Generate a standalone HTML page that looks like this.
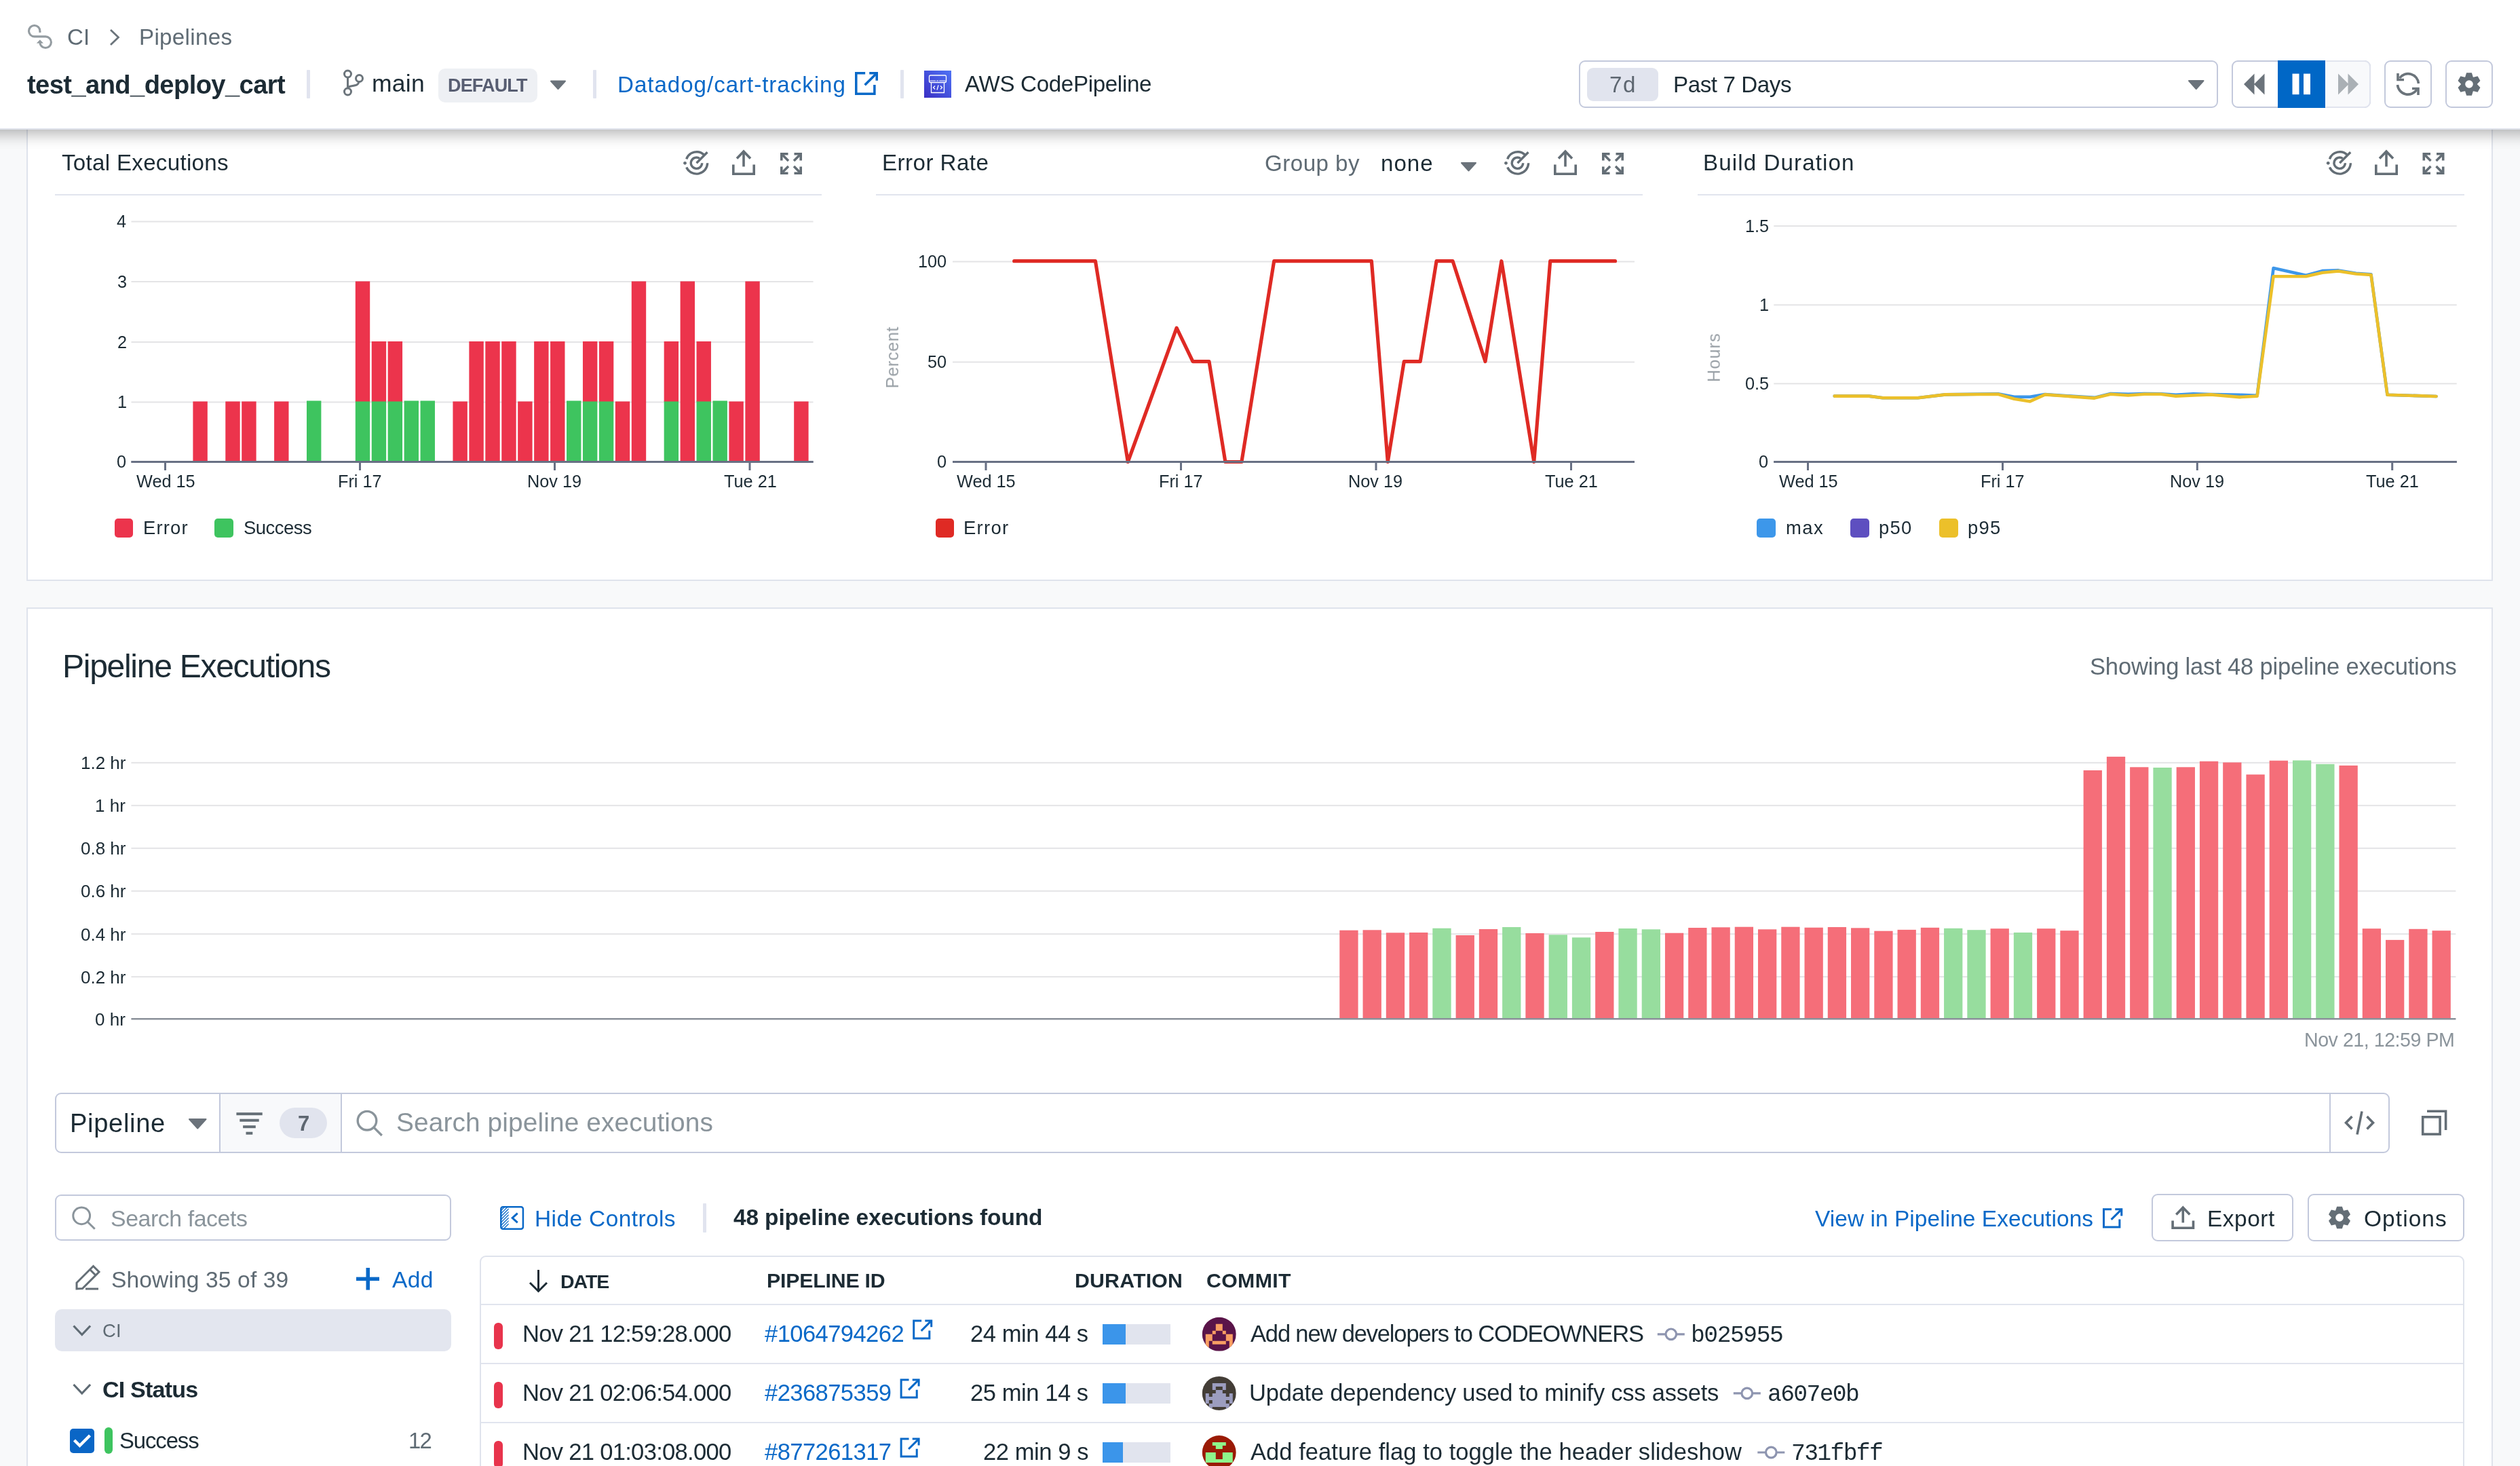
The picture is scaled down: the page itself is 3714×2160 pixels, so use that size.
<!DOCTYPE html><html><head><meta charset="utf-8"><style>html,body{margin:0;padding:0;width:3714px;height:2160px;overflow:hidden;background:#f8f9fa}body{position:relative}span{will-change:transform}</style></head><body>
<div style="position:absolute;left:0px;top:0px;width:3714px;height:2160px;background:#f8f9fa"></div>
<div style="position:absolute;left:39px;top:140px;width:3635px;height:716px;background:#fff;border:2px solid #dfe3ec;box-sizing:border-box"></div>
<div style="position:absolute;left:39px;top:895px;width:3635px;height:1400px;background:#fff;border:2px solid #dfe3ec;box-sizing:border-box"></div>
<div style="position:absolute;left:81px;top:286px;width:1130px;height:2px;background:#e1e4ee"></div>
<div style="position:absolute;left:1291px;top:286px;width:1130px;height:2px;background:#e1e4ee"></div>
<div style="position:absolute;left:2502px;top:286px;width:1130px;height:2px;background:#e1e4ee"></div>
<div style="position:absolute;left:169px;top:764px;width:27px;height:28px;background:#ec344c;border-radius:5px"></div>
<div style="position:absolute;left:316px;top:764px;width:28px;height:28px;background:#3ec45f;border-radius:5px"></div>
<div style="position:absolute;left:1379px;top:764px;width:27px;height:28px;background:#df2a24;border-radius:5px"></div>
<div style="position:absolute;left:2589px;top:764px;width:28px;height:28px;background:#3d97ea;border-radius:5px"></div>
<div style="position:absolute;left:2726.5px;top:764px;width:28px;height:28px;background:#5e4fc0;border-radius:5px"></div>
<div style="position:absolute;left:2858px;top:764px;width:28px;height:28px;background:#ecc02a;border-radius:5px"></div>
<div style="position:absolute;left:81.3px;top:1609.5px;width:3440.5px;height:89px;border:2px solid #c3c9dc;border-radius:9px;background:#fff;box-sizing:border-box"></div>
<div style="position:absolute;left:324.5px;top:1611.5px;width:177.5px;height:85px;background:#f8f9fb"></div>
<div style="position:absolute;left:323px;top:1611.5px;width:2px;height:85px;background:#c3c9dc"></div>
<div style="position:absolute;left:501.5px;top:1611.5px;width:2px;height:85px;background:#c3c9dc"></div>
<div style="position:absolute;left:3433px;top:1611.5px;width:2px;height:85px;background:#c3c9dc"></div>
<div style="position:absolute;left:412px;top:1632px;width:70px;height:45px;background:#e1e4ee;border-radius:23px"></div>
<div style="position:absolute;left:81.4px;top:1759.7px;width:584px;height:68.5px;border:2px solid #c3c9dc;border-radius:9px;background:#fff;box-sizing:border-box"></div>
<div style="position:absolute;left:81.4px;top:1929.2px;width:584px;height:61.5px;background:#e3e6ef;border-radius:10px"></div>
<div style="position:absolute;left:103.2px;top:2105.2px;width:35.8px;height:35.6px;background:#0a66c6;border-radius:5px"></div>
<div style="position:absolute;left:154px;top:2102.8px;width:12px;height:39.4px;background:#3ec45f;border-radius:6px"></div>
<div style="position:absolute;left:1036px;top:1773px;width:5px;height:43px;background:#e1e4ef;border-radius:1px"></div>
<div style="position:absolute;left:3170.8px;top:1759px;width:209.5px;height:69.5px;border:2px solid #c3c9dc;border-radius:9px;background:#fff;box-sizing:border-box"></div>
<div style="position:absolute;left:3400.5px;top:1759px;width:231px;height:69.5px;border:2px solid #c3c9dc;border-radius:9px;background:#fff;box-sizing:border-box"></div>
<div style="position:absolute;left:707px;top:1849.5px;width:2924.5px;height:400px;border:2px solid #dfe3ec;border-radius:9px;background:#fff;box-sizing:border-box"></div>
<div style="position:absolute;left:709px;top:1920.5px;width:2920.5px;height:2px;background:#e1e4ee"></div>
<div style="position:absolute;left:709px;top:2007.8px;width:2920.5px;height:2px;background:#e1e4ee"></div>
<div style="position:absolute;left:709px;top:2094.6px;width:2920.5px;height:2px;background:#e1e4ee"></div>
<div style="position:absolute;left:728.3px;top:1948.8px;width:12.5px;height:39.5px;background:#e8344c;border-radius:6px"></div>
<div style="position:absolute;left:1625.3px;top:1951.0px;width:100px;height:29.5px;background:#e1e4ee"></div>
<div style="position:absolute;left:1625.3px;top:1951.0px;width:33.5px;height:29.5px;background:#3b95ea"></div>
<div style="position:absolute;left:728.3px;top:2035.8999999999999px;width:12.5px;height:39.5px;background:#e8344c;border-radius:6px"></div>
<div style="position:absolute;left:1625.3px;top:2038.1px;width:100px;height:29.5px;background:#e1e4ee"></div>
<div style="position:absolute;left:1625.3px;top:2038.1px;width:34.0px;height:29.5px;background:#3b95ea"></div>
<div style="position:absolute;left:728.3px;top:2123.0px;width:12.5px;height:39.5px;background:#e8344c;border-radius:6px"></div>
<div style="position:absolute;left:1625.3px;top:2125.2px;width:100px;height:29.5px;background:#e1e4ee"></div>
<div style="position:absolute;left:1625.3px;top:2125.2px;width:29.90000000000009px;height:29.5px;background:#3b95ea"></div>
<svg style="position:absolute;left:0;top:0" width="3714" height="2160" viewBox="0 0 3714 2160">
<g fill="none" stroke="#646e76" stroke-width="3.4"><path d="M1011.7 234.3 A16 16 0 0 1 1038.0 228.5"/><path d="M1042.7 240.3 A16.2 16.2 0 0 1 1011.7 246.5"/><path d="M1034.7 240.3 A8.2 8.2 0 1 1 1031.0 233.3"/><path d="M1026.5 240.3 L1042.5 224.3"/></g><circle cx="1009.5" cy="240.3" r="2.4" fill="#646e76"/>
<g fill="none" stroke="#646e76" stroke-width="3.6"><path d="M1080.8 242.5 L1080.8 256.2 L1111.2 256.2 L1111.2 242.5"/><path d="M1096.0 245.5 L1096.0 224"/><path d="M1086 233.5 L1096.0 223.2 L1106 233.5"/></g>
<g fill="none" stroke="#646e76" stroke-width="3.6"><path d="M1151.8 236.5 L1151.8 226.8 L1161.5 226.8"/><path d="M1152 227 L1162 237"/><path d="M1170.5 226.8 L1180.2 226.8 L1180.2 236.5"/><path d="M1180 227 L1170 237"/><path d="M1151.8 245.5 L1151.8 255.2 L1161.5 255.2"/><path d="M1152 255 L1162 245"/><path d="M1170.5 255.2 L1180.2 255.2 L1180.2 245.5"/><path d="M1180 255 L1170 245"/></g>
<g fill="none" stroke="#646e76" stroke-width="3.4"><path d="M2221.7 234.3 A16 16 0 0 1 2248.0 228.5"/><path d="M2252.7 240.3 A16.2 16.2 0 0 1 2221.7 246.5"/><path d="M2244.7 240.3 A8.2 8.2 0 1 1 2241.0 233.3"/><path d="M2236.5 240.3 L2252.5 224.3"/></g><circle cx="2219.5" cy="240.3" r="2.4" fill="#646e76"/>
<g fill="none" stroke="#646e76" stroke-width="3.6"><path d="M2291.8 242.5 L2291.8 256.2 L2322.2 256.2 L2322.2 242.5"/><path d="M2307.0 245.5 L2307.0 224"/><path d="M2297 233.5 L2307.0 223.2 L2317 233.5"/></g>
<g fill="none" stroke="#646e76" stroke-width="3.6"><path d="M2362.8 236.5 L2362.8 226.8 L2372.5 226.8"/><path d="M2363 227 L2373 237"/><path d="M2381.5 226.8 L2391.2 226.8 L2391.2 236.5"/><path d="M2391 227 L2381 237"/><path d="M2362.8 245.5 L2362.8 255.2 L2372.5 255.2"/><path d="M2363 255 L2373 245"/><path d="M2381.5 255.2 L2391.2 255.2 L2391.2 245.5"/><path d="M2391 255 L2381 245"/></g>
<g fill="none" stroke="#646e76" stroke-width="3.4"><path d="M3433.3999999999996 234.3 A16 16 0 0 1 3459.7 228.5"/><path d="M3464.3999999999996 240.3 A16.2 16.2 0 0 1 3433.3999999999996 246.5"/><path d="M3456.3999999999996 240.3 A8.2 8.2 0 1 1 3452.7 233.3"/><path d="M3448.2 240.3 L3464.2 224.3"/></g><circle cx="3431.2" cy="240.3" r="2.4" fill="#646e76"/>
<g fill="none" stroke="#646e76" stroke-width="3.6"><path d="M3501.8 242.5 L3501.8 256.2 L3532.2 256.2 L3532.2 242.5"/><path d="M3517.0 245.5 L3517.0 224"/><path d="M3507 233.5 L3517.0 223.2 L3527 233.5"/></g>
<g fill="none" stroke="#646e76" stroke-width="3.6"><path d="M3572.3 236.5 L3572.3 226.8 L3582.0 226.8"/><path d="M3572.5 227 L3582.5 237"/><path d="M3591.0 226.8 L3600.7 226.8 L3600.7 236.5"/><path d="M3600.5 227 L3590.5 237"/><path d="M3572.3 245.5 L3572.3 255.2 L3582.0 255.2"/><path d="M3572.5 255 L3582.5 245"/><path d="M3591.0 255.2 L3600.7 255.2 L3600.7 245.5"/><path d="M3600.5 255 L3590.5 245"/></g>
<path d="M2154 240 L2175 240 L2164.5 251.5 Z" fill="#6b737b" stroke="#6b737b" stroke-width="2" stroke-linejoin="round"/>
<rect x="193.5" y="325.5" width="1005.0" height="2" fill="#e4e4e6"/>
<rect x="193.5" y="414" width="1005.0" height="2" fill="#e4e4e6"/>
<rect x="193.5" y="503" width="1005.0" height="2" fill="#e4e4e6"/>
<rect x="193.5" y="591.5" width="1005.0" height="2" fill="#e4e4e6"/>
<rect x="193.5" y="679" width="1005.0" height="3" fill="#687084"/>
<rect x="242.0" y="681" width="3" height="12" fill="#687084"/>
<rect x="529.0" y="681" width="3" height="12" fill="#687084"/>
<rect x="816.0" y="681" width="3" height="12" fill="#687084"/>
<rect x="1103.5" y="681" width="3" height="12" fill="#687084"/>
<rect x="284.40" y="591.50" width="21.4" height="88.50" fill="#ec344c"/>
<rect x="332.28" y="591.50" width="21.4" height="88.50" fill="#ec344c"/>
<rect x="356.22" y="591.50" width="21.4" height="88.50" fill="#ec344c"/>
<rect x="404.10" y="591.50" width="21.4" height="88.50" fill="#ec344c"/>
<rect x="451.98" y="590.50" width="21.4" height="88.50" fill="#3ec45f"/>
<rect x="523.80" y="590.50" width="21.4" height="88.50" fill="#3ec45f"/>
<rect x="523.80" y="414.50" width="21.4" height="177.00" fill="#ec344c"/>
<rect x="547.74" y="590.50" width="21.4" height="88.50" fill="#3ec45f"/>
<rect x="547.74" y="503.00" width="21.4" height="88.50" fill="#ec344c"/>
<rect x="571.68" y="590.50" width="21.4" height="88.50" fill="#3ec45f"/>
<rect x="571.68" y="503.00" width="21.4" height="88.50" fill="#ec344c"/>
<rect x="595.62" y="590.50" width="21.4" height="88.50" fill="#3ec45f"/>
<rect x="619.56" y="590.50" width="21.4" height="88.50" fill="#3ec45f"/>
<rect x="667.44" y="591.50" width="21.4" height="88.50" fill="#ec344c"/>
<rect x="691.38" y="503.00" width="21.4" height="177.00" fill="#ec344c"/>
<rect x="715.32" y="503.00" width="21.4" height="177.00" fill="#ec344c"/>
<rect x="739.26" y="503.00" width="21.4" height="177.00" fill="#ec344c"/>
<rect x="763.20" y="591.50" width="21.4" height="88.50" fill="#ec344c"/>
<rect x="787.14" y="503.00" width="21.4" height="177.00" fill="#ec344c"/>
<rect x="811.08" y="503.00" width="21.4" height="177.00" fill="#ec344c"/>
<rect x="835.02" y="590.50" width="21.4" height="88.50" fill="#3ec45f"/>
<rect x="858.96" y="590.50" width="21.4" height="88.50" fill="#3ec45f"/>
<rect x="858.96" y="503.00" width="21.4" height="88.50" fill="#ec344c"/>
<rect x="882.90" y="590.50" width="21.4" height="88.50" fill="#3ec45f"/>
<rect x="882.90" y="503.00" width="21.4" height="88.50" fill="#ec344c"/>
<rect x="906.84" y="591.50" width="21.4" height="88.50" fill="#ec344c"/>
<rect x="930.78" y="414.50" width="21.4" height="265.50" fill="#ec344c"/>
<rect x="978.66" y="590.50" width="21.4" height="88.50" fill="#3ec45f"/>
<rect x="978.66" y="503.00" width="21.4" height="88.50" fill="#ec344c"/>
<rect x="1002.60" y="414.50" width="21.4" height="265.50" fill="#ec344c"/>
<rect x="1026.54" y="590.50" width="21.4" height="88.50" fill="#3ec45f"/>
<rect x="1026.54" y="503.00" width="21.4" height="88.50" fill="#ec344c"/>
<rect x="1050.48" y="590.50" width="21.4" height="88.50" fill="#3ec45f"/>
<rect x="1074.42" y="591.50" width="21.4" height="88.50" fill="#ec344c"/>
<rect x="1098.36" y="414.50" width="21.4" height="265.50" fill="#ec344c"/>
<rect x="1170.18" y="591.50" width="21.4" height="88.50" fill="#ec344c"/>
<rect x="193.5" y="679" width="1005" height="3" fill="#687084"/>
<rect x="1404" y="384.5" width="1005" height="2" fill="#e4e4e6"/>
<rect x="1404" y="532.5" width="1005" height="2" fill="#e4e4e6"/>
<rect x="1404" y="679" width="1005" height="3" fill="#687084"/>
<rect x="1451.5" y="681" width="3" height="12" fill="#687084"/>
<rect x="1739.0" y="681" width="3" height="12" fill="#687084"/>
<rect x="2026.5" y="681" width="3" height="12" fill="#687084"/>
<rect x="2314.0" y="681" width="3" height="12" fill="#687084"/>
<path d="M1494.7 384.7 L1614.4 384.7 L1662.3 680.5 L1734.1 483.2 L1758.0 532.6 L1782.0 532.6 L1805.9 680.5 L1829.9 680.5 L1877.7 384.7 L2021.4 384.7 L2045.3 680.5 L2069.3 532.6 L2093.2 532.6 L2117.1 384.7 L2141.1 384.7 L2189.0 532.6 L2212.9 384.7 L2260.8 680.5 L2284.7 384.7 L2380.5 384.7" fill="none" stroke="#df2a24" stroke-width="5.2" stroke-linejoin="round" stroke-linecap="round"/>
<rect x="1404" y="679" width="1005" height="3" fill="#687084"/>
<rect x="2614.3" y="332" width="1006.3999999999996" height="2" fill="#e4e4e6"/>
<rect x="2614.3" y="448.3" width="1006.3999999999996" height="2" fill="#e4e4e6"/>
<rect x="2614.3" y="564.3" width="1006.3999999999996" height="2" fill="#e4e4e6"/>
<rect x="2614.3" y="679" width="1006.3999999999996" height="3" fill="#687084"/>
<rect x="2663.0" y="681" width="3" height="12" fill="#687084"/>
<rect x="2950.0" y="681" width="3" height="12" fill="#687084"/>
<rect x="3236.8" y="681" width="3" height="12" fill="#687084"/>
<rect x="3524.2" y="681" width="3" height="12" fill="#687084"/>
<path d="M2703.7 583.6 L2754.6 583.6 L2774.9 586.2 L2826.5 586.2 L2867.1 581.4 L2944.6 580.3 L2968.6 584.7 L2991.9 584.7 L3014.0 581.1 L3086.7 585.9 L3110.7 580.0 L3136.5 580.7 L3160.5 580.0 L3184.5 580.3 L3206.7 581.8 L3232.5 580.3 L3258.3 581.1 L3300.8 581.8 L3326.6 582.9 L3350.6 395.1 L3398.6 405.8 L3422.6 399.1 L3446.5 398.4 L3472.4 402.8 L3494.5 404.3 L3518.5 581.8 L3542.5 582.5 L3590.5 584.0" fill="none" stroke="#3d97ea" stroke-width="4.6" stroke-linejoin="round" stroke-linecap="round"/>
<path d="M2703.7 583.6 L2754.6 583.6 L2774.9 586.2 L2826.5 586.2 L2867.1 581.4 L2944.6 580.7 L2968.6 587.7 L2991.9 591.4 L3014.0 581.4 L3086.7 586.6 L3110.7 580.7 L3136.5 582.5 L3160.5 580.7 L3184.5 580.7 L3206.7 583.6 L3232.5 582.5 L3258.3 581.4 L3300.8 585.1 L3326.6 583.6 L3350.6 407.2 L3398.6 407.2 L3422.6 401.7 L3446.5 399.5 L3472.4 403.5 L3494.5 405.0 L3518.5 581.8 L3542.5 582.5 L3590.5 584.0" fill="none" stroke="#ecc02a" stroke-width="4.6" stroke-linejoin="round" stroke-linecap="round"/>
<rect x="2614.3" y="679" width="1006.4" height="3" fill="#687084"/>
<rect x="193.4" y="1122.8" width="3426" height="2" fill="#e4e4e6"/>
<rect x="193.4" y="1185.8" width="3426" height="2" fill="#e4e4e6"/>
<rect x="193.4" y="1248.8" width="3426" height="2" fill="#e4e4e6"/>
<rect x="193.4" y="1311.8" width="3426" height="2" fill="#e4e4e6"/>
<rect x="193.4" y="1375.2" width="3426" height="2" fill="#e4e4e6"/>
<rect x="193.4" y="1438.2" width="3426" height="2" fill="#e4e4e6"/>
<rect x="1974.30" y="1370.7" width="27.3" height="130.3" fill="#f56e79"/>
<rect x="2008.56" y="1370.3" width="27.3" height="130.7" fill="#f56e79"/>
<rect x="2042.82" y="1374.3" width="27.3" height="126.7" fill="#f56e79"/>
<rect x="2077.08" y="1374.0" width="27.3" height="127.0" fill="#f56e79"/>
<rect x="2111.34" y="1367.7" width="27.3" height="133.3" fill="#97dd9e"/>
<rect x="2145.60" y="1378.0" width="27.3" height="123.0" fill="#f56e79"/>
<rect x="2179.86" y="1369.0" width="27.3" height="132.0" fill="#f56e79"/>
<rect x="2214.12" y="1366.0" width="27.3" height="135.0" fill="#97dd9e"/>
<rect x="2248.38" y="1375.0" width="27.3" height="126.0" fill="#f56e79"/>
<rect x="2282.64" y="1377.3" width="27.3" height="123.7" fill="#97dd9e"/>
<rect x="2316.90" y="1381.3" width="27.3" height="119.7" fill="#97dd9e"/>
<rect x="2351.16" y="1373.0" width="27.3" height="128.0" fill="#f56e79"/>
<rect x="2385.42" y="1368.0" width="27.3" height="133.0" fill="#97dd9e"/>
<rect x="2419.68" y="1369.3" width="27.3" height="131.7" fill="#97dd9e"/>
<rect x="2453.94" y="1374.7" width="27.3" height="126.3" fill="#f56e79"/>
<rect x="2488.20" y="1367.0" width="27.3" height="134.0" fill="#f56e79"/>
<rect x="2522.46" y="1366.3" width="27.3" height="134.7" fill="#f56e79"/>
<rect x="2556.72" y="1365.7" width="27.3" height="135.3" fill="#f56e79"/>
<rect x="2590.98" y="1369.3" width="27.3" height="131.7" fill="#f56e79"/>
<rect x="2625.24" y="1365.7" width="27.3" height="135.3" fill="#f56e79"/>
<rect x="2659.50" y="1366.7" width="27.3" height="134.3" fill="#f56e79"/>
<rect x="2693.76" y="1366.0" width="27.3" height="135.0" fill="#f56e79"/>
<rect x="2728.02" y="1367.3" width="27.3" height="133.7" fill="#f56e79"/>
<rect x="2762.28" y="1371.7" width="27.3" height="129.3" fill="#f56e79"/>
<rect x="2796.54" y="1369.9" width="27.3" height="131.1" fill="#f56e79"/>
<rect x="2830.80" y="1366.8" width="27.3" height="134.2" fill="#f56e79"/>
<rect x="2865.06" y="1367.8" width="27.3" height="133.2" fill="#97dd9e"/>
<rect x="2899.32" y="1370.2" width="27.3" height="130.8" fill="#97dd9e"/>
<rect x="2933.58" y="1368.2" width="27.3" height="132.8" fill="#f56e79"/>
<rect x="2967.84" y="1374.0" width="27.3" height="127.0" fill="#97dd9e"/>
<rect x="3002.10" y="1368.2" width="27.3" height="132.8" fill="#f56e79"/>
<rect x="3036.36" y="1371.2" width="27.3" height="129.8" fill="#f56e79"/>
<rect x="3070.62" y="1135.0" width="27.3" height="366.0" fill="#f56e79"/>
<rect x="3104.88" y="1114.9" width="27.3" height="386.1" fill="#f56e79"/>
<rect x="3139.14" y="1130.3" width="27.3" height="370.7" fill="#f56e79"/>
<rect x="3173.40" y="1131.0" width="27.3" height="370.0" fill="#97dd9e"/>
<rect x="3207.66" y="1130.3" width="27.3" height="370.7" fill="#f56e79"/>
<rect x="3241.92" y="1121.7" width="27.3" height="379.3" fill="#f56e79"/>
<rect x="3276.18" y="1123.4" width="27.3" height="377.6" fill="#f56e79"/>
<rect x="3310.44" y="1141.2" width="27.3" height="359.8" fill="#f56e79"/>
<rect x="3344.70" y="1120.7" width="27.3" height="380.3" fill="#f56e79"/>
<rect x="3378.96" y="1120.4" width="27.3" height="380.6" fill="#97dd9e"/>
<rect x="3413.22" y="1125.8" width="27.3" height="375.2" fill="#97dd9e"/>
<rect x="3447.48" y="1127.9" width="27.3" height="373.1" fill="#f56e79"/>
<rect x="3481.74" y="1368.2" width="27.3" height="132.8" fill="#f56e79"/>
<rect x="3516.00" y="1384.9" width="27.3" height="116.1" fill="#f56e79"/>
<rect x="3550.26" y="1368.8" width="27.3" height="132.2" fill="#f56e79"/>
<rect x="3584.52" y="1371.2" width="27.3" height="129.8" fill="#f56e79"/>
<rect x="193.4" y="1500" width="3426" height="2.5" fill="#8a9099"/>
<path d="M279 1649 L303.5 1649 L291.25 1662.5 Z" fill="#6b737b" stroke="#6b737b" stroke-width="2" stroke-linejoin="round"/>
<g fill="#646e76"><rect x="348.4" y="1639.2" width="38.3" height="4"/><rect x="353.3" y="1648.7" width="28.4" height="4"/><rect x="358.1" y="1658.2" width="18.7" height="4"/><rect x="362.5" y="1667.7" width="9.8" height="4"/></g>
<g fill="none" stroke="#8a949b" stroke-width="3.4"><circle cx="540.988" cy="1651.188" r="13.787999999999998"/><path d="M550.6396000000001 1660.8396 L562.8 1673.0"/></g>
<g fill="none" stroke="#646e76" stroke-width="3.6"><path d="M3466.5 1645 L3457.5 1654.2 L3466.5 1663.4"/><path d="M3488.5 1645 L3497.5 1654.2 L3488.5 1663.4"/><path d="M3481 1637.5 L3474 1671.5"/></g>
<g fill="none" stroke="#646e76" stroke-width="3.6"><rect x="3570.7" y="1645.8" width="25.4" height="25.3"/><path d="M3577 1637.3 L3604.6 1637.3 L3604.6 1665"/></g>
<g fill="none" stroke="#8a949b" stroke-width="3"><circle cx="120.184" cy="1791.284" r="12.383999999999999"/><path d="M128.8528 1799.9528 L139.7 1810.8000000000002"/></g>
<g fill="none" stroke="#646e76" stroke-width="3"><path d="M113 1899 L113 1890 L137.5 1865.5 L146 1874 L121.5 1898.5 Z"/><path d="M132.5 1870.5 L141 1879"/><path d="M126 1899 L145 1899"/></g>
<g fill="#0a69c8"><rect x="539.5" y="1868" width="5.5" height="32.6"/><rect x="525" y="1881.6" width="34" height="5.5"/></g>
<path d="M108.5 1953.5 L120.8 1966.5 L133.1 1953.5" fill="none" stroke="#5f6b74" stroke-width="3.2"/>
<path d="M108.5 2040 L120.8 2053 L133.1 2040" fill="none" stroke="#5f6b74" stroke-width="3.2"/>
<path d="M109.5 2122 L117.5 2130 L132.5 2115" fill="none" stroke="#fff" stroke-width="4.4"/>
<clipPath id="hcclip"><rect x="738.5" y="1778.3" width="11.3" height="32.4"/></clipPath><path d="M738.5 1783.5 L749.8 1772.2 M738.5 1787.9 L749.8 1776.6 M738.5 1792.3 L749.8 1781.0 M738.5 1796.7 L749.8 1785.4 M738.5 1801.1 L749.8 1789.8 M738.5 1805.5 L749.8 1794.2 M738.5 1809.9 L749.8 1798.6 M738.5 1814.3 L749.8 1803.0 " fill="none" stroke="#0a69c8" stroke-width="1.3" clip-path="url(#hcclip)"/><g fill="none" stroke="#0a69c8"><rect x="738.3" y="1778.2" width="32.6" height="32.6" rx="3" stroke-width="2.5"/><path d="M762.7 1787.7 L755.2 1794.5 L762.7 1801.4" stroke-width="3"/></g>
<g fill="none" stroke="#0a69c8" stroke-width="3.05"><path d="M3112.07 1781.82 L3100.52 1781.82 L3100.52 1808.08 L3123.88 1808.08 L3123.88 1796.62"/><path d="M3117.28 1781.82 L3126.78 1781.82 L3126.78 1791.38"/><path d="M3126.78 1781.82 L3111.60 1796.91"/></g>
<g fill="none" stroke="#646e76" stroke-width="3.6"><path d="M3202.1000000000004 1798.5 L3202.1000000000004 1809.2 L3232.5 1809.2 L3232.5 1798.5"/><path d="M3217.3 1801.5 L3217.3 1780"/><path d="M3207.3 1789.5 L3217.3 1779.2 L3227.3 1789.5"/></g>
<path d="M3442.57 1782.19 L3444.14 1777.75 L3451.86 1777.75 L3453.43 1782.19 L3453.90 1783.78 L3455.52 1783.39 L3460.14 1782.53 L3464.00 1789.22 L3460.94 1792.79 L3459.80 1794.00 L3460.94 1795.21 L3464.00 1798.78 L3460.14 1805.47 L3455.52 1804.61 L3453.90 1804.22 L3453.43 1805.81 L3451.86 1810.25 L3444.14 1810.25 L3442.57 1805.81 L3442.10 1804.22 L3440.48 1804.61 L3435.86 1805.47 L3432.00 1798.78 L3435.06 1795.21 L3436.20 1794.00 L3435.06 1792.79 L3432.00 1789.22 L3435.86 1782.53 L3440.48 1783.39 L3442.10 1783.78 Z" fill="#646e76"/><circle cx="3448" cy="1794" r="5.8" fill="#fff"/>
<g fill="none" stroke="#1c2b34" stroke-width="3"><path d="M793.5 1871 L793.5 1903"/><path d="M781 1890 L793.5 1902.5 L806 1890"/></g>
<g fill="none" stroke="#0a69c8" stroke-width="3.02"><path d="M1358.13 1945.91 L1346.71 1945.91 L1346.71 1971.89 L1369.82 1971.89 L1369.82 1960.55"/><path d="M1363.30 1945.91 L1372.69 1945.91 L1372.69 1955.36"/><path d="M1372.69 1945.91 L1357.67 1960.84"/></g>
<g fill="none" stroke="#8e95b0" stroke-width="3.2"><circle cx="2462.8" cy="1965.8" r="7.8"/><path d="M2442.8 1965.8 L2454.8 1965.8 M2470.8 1965.8 L2482.8 1965.8"/></g>
<g fill="none" stroke="#0a69c8" stroke-width="3.02"><path d="M1339.53 2033.01 L1328.11 2033.01 L1328.11 2058.99 L1351.22 2058.99 L1351.22 2047.65"/><path d="M1344.70 2033.01 L1354.09 2033.01 L1354.09 2042.46"/><path d="M1354.09 2033.01 L1339.07 2047.94"/></g>
<g fill="none" stroke="#8e95b0" stroke-width="3.2"><circle cx="2574.8" cy="2052.9" r="7.8"/><path d="M2554.8 2052.9 L2566.8 2052.9 M2582.8 2052.9 L2594.8 2052.9"/></g>
<g fill="none" stroke="#0a69c8" stroke-width="3.02"><path d="M1339.53 2120.11 L1328.11 2120.11 L1328.11 2146.09 L1351.22 2146.09 L1351.22 2134.75"/><path d="M1344.70 2120.11 L1354.09 2120.11 L1354.09 2129.56"/><path d="M1354.09 2120.11 L1339.07 2135.04"/></g>
<g fill="none" stroke="#8e95b0" stroke-width="3.2"><circle cx="2610.3" cy="2140.0" r="7.8"/><path d="M2590.3 2140.0 L2602.3 2140.0 M2618.3 2140.0 L2630.3 2140.0"/></g>
<clipPath id="av1"><circle cx="1796.8" cy="1965.8" r="25"/></clipPath><g clip-path="url(#av1)"><rect x="1771.8" y="1940.8" width="50" height="50" fill="#5a1449"/><path d="M1791.8 1950.8h5v5h-5zM1796.8 1950.8h5v5h-5zM1791.8 1955.8h5v5h-5zM1796.8 1955.8h5v5h-5zM1786.8 1960.8h5v5h-5zM1801.8 1960.8h5v5h-5zM1776.8 1965.8h5v5h-5zM1781.8 1965.8h5v5h-5zM1806.8 1965.8h5v5h-5zM1811.8 1965.8h5v5h-5zM1776.8 1970.8h5v5h-5zM1781.8 1970.8h5v5h-5zM1806.8 1970.8h5v5h-5zM1811.8 1970.8h5v5h-5zM1776.8 1975.8h5v5h-5zM1786.8 1975.8h5v5h-5zM1791.8 1975.8h5v5h-5zM1796.8 1975.8h5v5h-5zM1801.8 1975.8h5v5h-5zM1811.8 1975.8h5v5h-5zM1776.8 1980.8h5v5h-5zM1811.8 1980.8h5v5h-5z" fill="#f99e63"/></g>
<clipPath id="av2"><circle cx="1796.8" cy="2052.9" r="25"/></clipPath><g clip-path="url(#av2)"><rect x="1771.8" y="2027.9" width="50" height="50" fill="#433d36"/><path d="M1786.8 2037.9h5v5h-5zM1791.8 2037.9h5v5h-5zM1796.8 2037.9h5v5h-5zM1801.8 2037.9h5v5h-5zM1786.8 2042.9h5v5h-5zM1801.8 2042.9h5v5h-5zM1791.8 2047.9h5v5h-5zM1796.8 2047.9h5v5h-5zM1776.8 2052.9h5v5h-5zM1786.8 2052.9h5v5h-5zM1791.8 2052.9h5v5h-5zM1796.8 2052.9h5v5h-5zM1801.8 2052.9h5v5h-5zM1811.8 2052.9h5v5h-5zM1776.8 2057.9h5v5h-5zM1781.8 2057.9h5v5h-5zM1786.8 2057.9h5v5h-5zM1791.8 2057.9h5v5h-5zM1796.8 2057.9h5v5h-5zM1801.8 2057.9h5v5h-5zM1806.8 2057.9h5v5h-5zM1811.8 2057.9h5v5h-5zM1776.8 2062.9h5v5h-5zM1786.8 2062.9h5v5h-5zM1791.8 2062.9h5v5h-5zM1796.8 2062.9h5v5h-5zM1801.8 2062.9h5v5h-5zM1811.8 2062.9h5v5h-5zM1781.8 2067.9h5v5h-5zM1786.8 2067.9h5v5h-5zM1791.8 2067.9h5v5h-5zM1796.8 2067.9h5v5h-5zM1801.8 2067.9h5v5h-5zM1806.8 2067.9h5v5h-5zM1781.8 2072.9h5v5h-5zM1806.8 2072.9h5v5h-5z" fill="#9c9dbf"/></g>
<clipPath id="av3"><circle cx="1796.8" cy="2140" r="25"/></clipPath><g clip-path="url(#av3)"><rect x="1771.8" y="2115" width="50" height="50" fill="#9a1a05"/><path d="M1786.8 2125.0h5v5h-5zM1791.8 2125.0h5v5h-5zM1796.8 2125.0h5v5h-5zM1801.8 2125.0h5v5h-5zM1791.8 2130.0h5v5h-5zM1796.8 2130.0h5v5h-5zM1776.8 2140.0h5v5h-5zM1781.8 2140.0h5v5h-5zM1786.8 2140.0h5v5h-5zM1801.8 2140.0h5v5h-5zM1806.8 2140.0h5v5h-5zM1811.8 2140.0h5v5h-5zM1776.8 2145.0h5v5h-5zM1781.8 2145.0h5v5h-5zM1786.8 2145.0h5v5h-5zM1801.8 2145.0h5v5h-5zM1806.8 2145.0h5v5h-5zM1811.8 2145.0h5v5h-5zM1776.8 2150.0h5v5h-5zM1781.8 2150.0h5v5h-5zM1786.8 2150.0h5v5h-5zM1791.8 2150.0h5v5h-5zM1796.8 2150.0h5v5h-5zM1801.8 2150.0h5v5h-5zM1806.8 2150.0h5v5h-5zM1811.8 2150.0h5v5h-5z" fill="#8ef58a"/></g>
</svg>
<span id="p1t" style="position:absolute;left:91.00px;top:222.94px;font-family:'Liberation Sans', sans-serif;font-size:33.14px;line-height:33.14px;font-weight:400;color:#1c2b34;white-space:pre;letter-spacing:0.290px;">Total Executions</span>
<span id="p2t" style="position:absolute;left:1299.50px;top:222.94px;font-family:'Liberation Sans', sans-serif;font-size:33.14px;line-height:33.14px;font-weight:400;color:#1c2b34;white-space:pre;letter-spacing:0.460px;">Error Rate</span>
<span id="p3t" style="position:absolute;left:2510.40px;top:222.94px;font-family:'Liberation Sans', sans-serif;font-size:33.14px;line-height:33.14px;font-weight:400;color:#1c2b34;white-space:pre;letter-spacing:1.104px;">Build Duration</span>
<span id="groupby" style="position:absolute;left:1864.00px;top:223.94px;font-family:'Liberation Sans', sans-serif;font-size:33.14px;line-height:33.14px;font-weight:400;color:#5f6b74;white-space:pre;letter-spacing:0.473px;">Group by</span>
<span id="none" style="position:absolute;left:2035.00px;top:223.94px;font-family:'Liberation Sans', sans-serif;font-size:33.14px;line-height:33.14px;font-weight:400;color:#1c2b34;white-space:pre;letter-spacing:1.000px;">none</span>
<span id="yl_193.5_4" style="position:absolute;left:172.00px;top:314.29px;font-family:'Liberation Sans', sans-serif;font-size:25.29px;line-height:25.29px;font-weight:400;color:#1c2b34;white-space:pre;letter-spacing:0.000px;">4</span>
<span id="yl_193.5_3" style="position:absolute;left:173.00px;top:402.79px;font-family:'Liberation Sans', sans-serif;font-size:25.29px;line-height:25.29px;font-weight:400;color:#1c2b34;white-space:pre;letter-spacing:0.000px;">3</span>
<span id="yl_193.5_2" style="position:absolute;left:173.00px;top:491.79px;font-family:'Liberation Sans', sans-serif;font-size:25.29px;line-height:25.29px;font-weight:400;color:#1c2b34;white-space:pre;letter-spacing:0.000px;">2</span>
<span id="yl_193.5_1" style="position:absolute;left:173.00px;top:580.29px;font-family:'Liberation Sans', sans-serif;font-size:25.29px;line-height:25.29px;font-weight:400;color:#1c2b34;white-space:pre;letter-spacing:0.000px;">1</span>
<span id="xl_243.5" style="position:absolute;left:200.70px;top:696.59px;font-family:'Liberation Sans', sans-serif;font-size:25.29px;line-height:25.29px;font-weight:400;color:#1c2b34;white-space:pre;letter-spacing:0.000px;">Wed 15</span>
<span id="xl_530.5" style="position:absolute;left:497.72px;top:696.59px;font-family:'Liberation Sans', sans-serif;font-size:25.29px;line-height:25.29px;font-weight:400;color:#1c2b34;white-space:pre;letter-spacing:0.000px;">Fri 17</span>
<span id="xl_817.5" style="position:absolute;left:776.98px;top:696.59px;font-family:'Liberation Sans', sans-serif;font-size:25.29px;line-height:25.29px;font-weight:400;color:#1c2b34;white-space:pre;letter-spacing:0.000px;">Nov 19</span>
<span id="xl_1105" style="position:absolute;left:1066.65px;top:696.59px;font-family:'Liberation Sans', sans-serif;font-size:25.29px;line-height:25.29px;font-weight:400;color:#1c2b34;white-space:pre;letter-spacing:0.000px;">Tue 21</span>
<span id="yl0_193.5" style="position:absolute;left:172.00px;top:668.09px;font-family:'Liberation Sans', sans-serif;font-size:25.29px;line-height:25.29px;font-weight:400;color:#1c2b34;white-space:pre;letter-spacing:0.000px;">0</span>
<span id="lg_err1" style="position:absolute;left:210.50px;top:764.28px;font-family:'Liberation Sans', sans-serif;font-size:27.43px;line-height:27.43px;font-weight:400;color:#1c2b34;white-space:pre;letter-spacing:1.174px;">Error</span>
<span id="lg_succ1" style="position:absolute;left:358.50px;top:764.28px;font-family:'Liberation Sans', sans-serif;font-size:27.43px;line-height:27.43px;font-weight:400;color:#1c2b34;white-space:pre;letter-spacing:-0.487px;">Success</span>
<span id="yl_1404_100" style="position:absolute;left:1352.88px;top:373.29px;font-family:'Liberation Sans', sans-serif;font-size:25.29px;line-height:25.29px;font-weight:400;color:#1c2b34;white-space:pre;letter-spacing:0.000px;">100</span>
<span id="yl_1404_50" style="position:absolute;left:1366.94px;top:521.29px;font-family:'Liberation Sans', sans-serif;font-size:25.29px;line-height:25.29px;font-weight:400;color:#1c2b34;white-space:pre;letter-spacing:0.000px;">50</span>
<span id="xl_1453" style="position:absolute;left:1410.20px;top:696.59px;font-family:'Liberation Sans', sans-serif;font-size:25.29px;line-height:25.29px;font-weight:400;color:#1c2b34;white-space:pre;letter-spacing:0.000px;">Wed 15</span>
<span id="xl_1740.5" style="position:absolute;left:1707.72px;top:696.59px;font-family:'Liberation Sans', sans-serif;font-size:25.29px;line-height:25.29px;font-weight:400;color:#1c2b34;white-space:pre;letter-spacing:0.000px;">Fri 17</span>
<span id="xl_2028" style="position:absolute;left:1987.48px;top:696.59px;font-family:'Liberation Sans', sans-serif;font-size:25.29px;line-height:25.29px;font-weight:400;color:#1c2b34;white-space:pre;letter-spacing:0.000px;">Nov 19</span>
<span id="xl_2315.5" style="position:absolute;left:2277.15px;top:696.59px;font-family:'Liberation Sans', sans-serif;font-size:25.29px;line-height:25.29px;font-weight:400;color:#1c2b34;white-space:pre;letter-spacing:0.000px;">Tue 21</span>
<span id="yl0_1404" style="position:absolute;left:1381.00px;top:668.09px;font-family:'Liberation Sans', sans-serif;font-size:25.29px;line-height:25.29px;font-weight:400;color:#1c2b34;white-space:pre;letter-spacing:0.000px;">0</span>
<span id="lg_err2" style="position:absolute;left:1420.00px;top:764.28px;font-family:'Liberation Sans', sans-serif;font-size:27.43px;line-height:27.43px;font-weight:400;color:#1c2b34;white-space:pre;letter-spacing:1.299px;">Error</span>
<span id="percent" style="position:absolute;left:1269.70px;top:514.09px;font-family:'Liberation Sans', sans-serif;font-size:25.29px;line-height:25.29px;font-weight:400;color:#9aa1a7;white-space:pre;letter-spacing:0.583px;transform:rotate(-90deg);transform-origin:50% 50%;">Percent</span>
<span id="yl_2614.3_1.5" style="position:absolute;left:2571.92px;top:320.79px;font-family:'Liberation Sans', sans-serif;font-size:25.29px;line-height:25.29px;font-weight:400;color:#1c2b34;white-space:pre;letter-spacing:0.000px;">1.5</span>
<span id="yl_2614.3_1" style="position:absolute;left:2593.00px;top:437.09px;font-family:'Liberation Sans', sans-serif;font-size:25.29px;line-height:25.29px;font-weight:400;color:#1c2b34;white-space:pre;letter-spacing:0.000px;">1</span>
<span id="yl_2614.3_0.5" style="position:absolute;left:2571.92px;top:553.09px;font-family:'Liberation Sans', sans-serif;font-size:25.29px;line-height:25.29px;font-weight:400;color:#1c2b34;white-space:pre;letter-spacing:0.000px;">0.5</span>
<span id="xl_2664.5" style="position:absolute;left:2621.70px;top:696.59px;font-family:'Liberation Sans', sans-serif;font-size:25.29px;line-height:25.29px;font-weight:400;color:#1c2b34;white-space:pre;letter-spacing:0.000px;">Wed 15</span>
<span id="xl_2951.5" style="position:absolute;left:2918.72px;top:696.59px;font-family:'Liberation Sans', sans-serif;font-size:25.29px;line-height:25.29px;font-weight:400;color:#1c2b34;white-space:pre;letter-spacing:0.000px;">Fri 17</span>
<span id="xl_3238.3" style="position:absolute;left:3197.78px;top:696.59px;font-family:'Liberation Sans', sans-serif;font-size:25.29px;line-height:25.29px;font-weight:400;color:#1c2b34;white-space:pre;letter-spacing:0.000px;">Nov 19</span>
<span id="xl_3525.7" style="position:absolute;left:3487.35px;top:696.59px;font-family:'Liberation Sans', sans-serif;font-size:25.29px;line-height:25.29px;font-weight:400;color:#1c2b34;white-space:pre;letter-spacing:0.000px;">Tue 21</span>
<span id="yl0_2614.3" style="position:absolute;left:2592.00px;top:668.09px;font-family:'Liberation Sans', sans-serif;font-size:25.29px;line-height:25.29px;font-weight:400;color:#1c2b34;white-space:pre;letter-spacing:0.000px;">0</span>
<span id="lg_max" style="position:absolute;left:2631.50px;top:764.28px;font-family:'Liberation Sans', sans-serif;font-size:27.43px;line-height:27.43px;font-weight:400;color:#1c2b34;white-space:pre;letter-spacing:1.453px;">max</span>
<span id="lg_p50" style="position:absolute;left:2769.00px;top:764.28px;font-family:'Liberation Sans', sans-serif;font-size:27.43px;line-height:27.43px;font-weight:400;color:#1c2b34;white-space:pre;letter-spacing:1.249px;">p50</span>
<span id="lg_p95" style="position:absolute;left:2900.00px;top:764.28px;font-family:'Liberation Sans', sans-serif;font-size:27.43px;line-height:27.43px;font-weight:400;color:#1c2b34;white-space:pre;letter-spacing:1.249px;">p95</span>
<span id="hours" style="position:absolute;left:2489.50px;top:514.09px;font-family:'Liberation Sans', sans-serif;font-size:25.29px;line-height:25.29px;font-weight:400;color:#9aa1a7;white-space:pre;letter-spacing:1.051px;transform:rotate(-90deg);transform-origin:50% 50%;">Hours</span>
<span id="pe_title" style="position:absolute;left:91.50px;top:957.04px;font-family:'Liberation Sans', sans-serif;font-size:48.14px;line-height:48.14px;font-weight:400;color:#1c2b34;white-space:pre;letter-spacing:-1.331px;">Pipeline Executions</span>
<span id="pe_showing" style="position:absolute;left:3080.30px;top:965.23px;font-family:'Liberation Sans', sans-serif;font-size:34.57px;line-height:34.57px;font-weight:400;color:#5f6b74;white-space:pre;letter-spacing:-0.198px;">Showing last 48 pipeline executions</span>
<span id="yl2_1.2 hr" style="position:absolute;left:118.67px;top:1111.29px;font-family:'Liberation Sans', sans-serif;font-size:26.0px;line-height:26.0px;font-weight:400;color:#1c2b34;white-space:pre;letter-spacing:0.000px;">1.2 hr</span>
<span id="yl2_1 hr" style="position:absolute;left:140.36px;top:1174.29px;font-family:'Liberation Sans', sans-serif;font-size:26.0px;line-height:26.0px;font-weight:400;color:#1c2b34;white-space:pre;letter-spacing:0.000px;">1 hr</span>
<span id="yl2_0.8 hr" style="position:absolute;left:118.67px;top:1237.29px;font-family:'Liberation Sans', sans-serif;font-size:26.0px;line-height:26.0px;font-weight:400;color:#1c2b34;white-space:pre;letter-spacing:0.000px;">0.8 hr</span>
<span id="yl2_0.6 hr" style="position:absolute;left:118.67px;top:1300.29px;font-family:'Liberation Sans', sans-serif;font-size:26.0px;line-height:26.0px;font-weight:400;color:#1c2b34;white-space:pre;letter-spacing:0.000px;">0.6 hr</span>
<span id="yl2_0.4 hr" style="position:absolute;left:118.67px;top:1363.69px;font-family:'Liberation Sans', sans-serif;font-size:26.0px;line-height:26.0px;font-weight:400;color:#1c2b34;white-space:pre;letter-spacing:0.000px;">0.4 hr</span>
<span id="yl2_0.2 hr" style="position:absolute;left:118.67px;top:1426.69px;font-family:'Liberation Sans', sans-serif;font-size:26.0px;line-height:26.0px;font-weight:400;color:#1c2b34;white-space:pre;letter-spacing:0.000px;">0.2 hr</span>
<span id="yl2_0" style="position:absolute;left:140.36px;top:1488.99px;font-family:'Liberation Sans', sans-serif;font-size:26.0px;line-height:26.0px;font-weight:400;color:#1c2b34;white-space:pre;letter-spacing:0.000px;">0 hr</span>
<span id="nov21" style="position:absolute;left:3396.00px;top:1517.81px;font-family:'Liberation Sans', sans-serif;font-size:28.57px;line-height:28.57px;font-weight:400;color:#8b949b;white-space:pre;letter-spacing:-0.456px;">Nov 21, 12:59 PM</span>
<span id="sb_pipeline" style="position:absolute;left:102.60px;top:1636.21px;font-family:'Liberation Sans', sans-serif;font-size:38.14px;line-height:38.14px;font-weight:400;color:#1c2b34;white-space:pre;letter-spacing:0.650px;">Pipeline</span>
<span id="sb_7" style="position:absolute;left:439.00px;top:1639.75px;font-family:'Liberation Sans', sans-serif;font-size:31.0px;line-height:31.0px;font-weight:700;color:#5d6670;white-space:pre;letter-spacing:0.000px;">7</span>
<span id="sb_ph" style="position:absolute;left:584.00px;top:1635.40px;font-family:'Liberation Sans', sans-serif;font-size:38.86px;line-height:38.86px;font-weight:400;color:#8a949b;white-space:pre;letter-spacing:0.099px;">Search pipeline executions</span>
<span id="fs_ph" style="position:absolute;left:163.00px;top:1778.93px;font-family:'Liberation Sans', sans-serif;font-size:33.86px;line-height:33.86px;font-weight:400;color:#8a949b;white-space:pre;letter-spacing:-0.425px;">Search facets</span>
<span id="fs_showing" style="position:absolute;left:164.00px;top:1868.58px;font-family:'Liberation Sans', sans-serif;font-size:33.57px;line-height:33.57px;font-weight:400;color:#5f6b74;white-space:pre;letter-spacing:0.126px;">Showing 35 of 39</span>
<span id="fs_add" style="position:absolute;left:578.40px;top:1868.58px;font-family:'Liberation Sans', sans-serif;font-size:33.57px;line-height:33.57px;font-weight:400;color:#0a69c8;white-space:pre;letter-spacing:0.374px;">Add</span>
<span id="fs_ci" style="position:absolute;left:151.30px;top:1946.88px;font-family:'Liberation Sans', sans-serif;font-size:27.43px;line-height:27.43px;font-weight:400;color:#5f6b74;white-space:pre;letter-spacing:0.197px;">CI</span>
<span id="fs_cistatus" style="position:absolute;left:151.30px;top:2029.59px;font-family:'Liberation Sans', sans-serif;font-size:34.14px;line-height:34.14px;font-weight:700;color:#1c2b34;white-space:pre;letter-spacing:-0.840px;">CI Status</span>
<span id="fs_success" style="position:absolute;left:176.00px;top:2107.18px;font-family:'Liberation Sans', sans-serif;font-size:32.86px;line-height:32.86px;font-weight:400;color:#1c2b34;white-space:pre;letter-spacing:-1.093px;">Success</span>
<span id="fs_12" style="position:absolute;left:601.80px;top:2107.18px;font-family:'Liberation Sans', sans-serif;font-size:32.86px;line-height:32.86px;font-weight:400;color:#5f6b74;white-space:pre;letter-spacing:-1.875px;">12</span>
<span id="hide" style="position:absolute;left:788.00px;top:1778.79px;font-family:'Liberation Sans', sans-serif;font-size:33.43px;line-height:33.43px;font-weight:400;color:#0a69c8;white-space:pre;letter-spacing:0.420px;">Hide Controls</span>
<span id="found" style="position:absolute;left:1081.00px;top:1776.89px;font-family:'Liberation Sans', sans-serif;font-size:33.43px;line-height:33.43px;font-weight:700;color:#1c2b34;white-space:pre;letter-spacing:-0.122px;">48 pipeline executions found</span>
<span id="viewin" style="position:absolute;left:2675.30px;top:1779.29px;font-family:'Liberation Sans', sans-serif;font-size:33.43px;line-height:33.43px;font-weight:400;color:#0a69c8;white-space:pre;letter-spacing:0.073px;">View in Pipeline Executions</span>
<span id="export" style="position:absolute;left:3253.00px;top:1779.29px;font-family:'Liberation Sans', sans-serif;font-size:33.43px;line-height:33.43px;font-weight:400;color:#1c2b34;white-space:pre;letter-spacing:0.538px;">Export</span>
<span id="options" style="position:absolute;left:3483.50px;top:1779.29px;font-family:'Liberation Sans', sans-serif;font-size:33.43px;line-height:33.43px;font-weight:400;color:#1c2b34;white-space:pre;letter-spacing:1.088px;">Options</span>
<span id="th_date" style="position:absolute;left:826.40px;top:1873.87px;font-family:'Liberation Sans', sans-serif;font-size:28.5px;line-height:28.5px;font-weight:700;color:#1c2b34;white-space:pre;letter-spacing:-1.086px;">DATE</span>
<span id="th_pid" style="position:absolute;left:1130.00px;top:1872.35px;font-family:'Liberation Sans', sans-serif;font-size:30.29px;line-height:30.29px;font-weight:700;color:#1c2b34;white-space:pre;letter-spacing:-0.201px;">PIPELINE ID</span>
<span id="th_dur" style="position:absolute;left:1584.00px;top:1872.35px;font-family:'Liberation Sans', sans-serif;font-size:30.29px;line-height:30.29px;font-weight:700;color:#1c2b34;white-space:pre;letter-spacing:0.187px;">DURATION</span>
<span id="th_commit" style="position:absolute;left:1777.50px;top:1872.35px;font-family:'Liberation Sans', sans-serif;font-size:30.29px;line-height:30.29px;font-weight:700;color:#1c2b34;white-space:pre;letter-spacing:0.343px;">COMMIT</span>
<span id="r0_dt" style="position:absolute;left:769.70px;top:1948.03px;font-family:'Liberation Sans', sans-serif;font-size:34.57px;line-height:34.57px;font-weight:400;color:#1c2b34;white-space:pre;letter-spacing:-0.705px;">Nov 21 12:59:28.000</span>
<span id="r0_pid" style="position:absolute;left:1126.80px;top:1948.03px;font-family:'Liberation Sans', sans-serif;font-size:34.57px;line-height:34.57px;font-weight:400;color:#0a69c8;white-space:pre;letter-spacing:-0.582px;">#1064794262</span>
<span id="r0_dur" style="position:absolute;left:1430.30px;top:1948.03px;font-family:'Liberation Sans', sans-serif;font-size:34.57px;line-height:34.57px;font-weight:400;color:#1c2b34;white-space:pre;letter-spacing:-0.459px;">24 min 44 s</span>
<span id="r0_msg" style="position:absolute;left:1843.00px;top:1948.03px;font-family:'Liberation Sans', sans-serif;font-size:34.57px;line-height:34.57px;font-weight:400;color:#1c2b34;white-space:pre;letter-spacing:-1.182px;">Add new developers to CODEOWNERS</span>
<span id="r0_sha" style="position:absolute;left:2491.80px;top:1950.76px;font-family:'Liberation Mono', monospace;font-size:34.63px;line-height:34.63px;font-weight:400;color:#1c2b34;white-space:pre;letter-spacing:-1.445px;">b025955</span>
<span id="r1_dt" style="position:absolute;left:769.70px;top:2035.13px;font-family:'Liberation Sans', sans-serif;font-size:34.57px;line-height:34.57px;font-weight:400;color:#1c2b34;white-space:pre;letter-spacing:-0.705px;">Nov 21 02:06:54.000</span>
<span id="r1_pid" style="position:absolute;left:1126.80px;top:2035.13px;font-family:'Liberation Sans', sans-serif;font-size:34.57px;line-height:34.57px;font-weight:400;color:#0a69c8;white-space:pre;letter-spacing:-0.578px;">#236875359</span>
<span id="r1_dur" style="position:absolute;left:1430.30px;top:2035.13px;font-family:'Liberation Sans', sans-serif;font-size:34.57px;line-height:34.57px;font-weight:400;color:#1c2b34;white-space:pre;letter-spacing:-0.459px;">25 min 14 s</span>
<span id="r1_msg" style="position:absolute;left:1841.00px;top:2035.13px;font-family:'Liberation Sans', sans-serif;font-size:34.57px;line-height:34.57px;font-weight:400;color:#1c2b34;white-space:pre;letter-spacing:-0.259px;">Update dependency used to minify css assets</span>
<span id="r1_sha" style="position:absolute;left:2604.80px;top:2037.86px;font-family:'Liberation Mono', monospace;font-size:34.63px;line-height:34.63px;font-weight:400;color:#1c2b34;white-space:pre;letter-spacing:-1.612px;">a607e0b</span>
<span id="r2_dt" style="position:absolute;left:769.70px;top:2122.23px;font-family:'Liberation Sans', sans-serif;font-size:34.57px;line-height:34.57px;font-weight:400;color:#1c2b34;white-space:pre;letter-spacing:-0.705px;">Nov 21 01:03:08.000</span>
<span id="r2_pid" style="position:absolute;left:1126.80px;top:2122.23px;font-family:'Liberation Sans', sans-serif;font-size:34.57px;line-height:34.57px;font-weight:400;color:#0a69c8;white-space:pre;letter-spacing:-0.578px;">#877261317</span>
<span id="r2_dur" style="position:absolute;left:1448.80px;top:2122.23px;font-family:'Liberation Sans', sans-serif;font-size:34.57px;line-height:34.57px;font-weight:400;color:#1c2b34;white-space:pre;letter-spacing:-0.429px;">22 min 9 s</span>
<span id="r2_msg" style="position:absolute;left:1843.00px;top:2122.23px;font-family:'Liberation Sans', sans-serif;font-size:34.57px;line-height:34.57px;font-weight:400;color:#1c2b34;white-space:pre;letter-spacing:0.030px;">Add feature flag to toggle the header slideshow</span>
<span id="r2_sha" style="position:absolute;left:2640.30px;top:2124.96px;font-family:'Liberation Mono', monospace;font-size:34.63px;line-height:34.63px;font-weight:400;color:#1c2b34;white-space:pre;letter-spacing:-1.612px;">731fbff</span>
<div style="position:absolute;left:0;top:0;width:3714px;height:230px">
<div style="position:absolute;left:0;top:0;width:3714px;height:189px;background:#fff"></div>
<div style="position:absolute;left:0;top:189px;width:3714px;height:2px;background:#e0e3ec"></div>
<div style="position:absolute;left:0;top:191px;width:3714px;height:30px;background:linear-gradient(to bottom,rgba(0,0,0,0.22) 0px,rgba(0,0,0,0.12) 9px,rgba(0,0,0,0.055) 16px,rgba(0,0,0,0.02) 22px,rgba(0,0,0,0) 30px)"></div>
<div style="position:absolute;left:452px;top:103px;width:5px;height:42px;background:#e1e4ef;border-radius:1px"></div>
<div style="position:absolute;left:874px;top:103px;width:5px;height:42px;background:#e1e4ef;border-radius:1px"></div>
<div style="position:absolute;left:1327px;top:103px;width:5px;height:42px;background:#e1e4ef;border-radius:1px"></div>
<div style="position:absolute;left:646px;top:101px;width:146px;height:50px;background:#eef0f4;border-radius:10px"></div>
<div style="position:absolute;left:2327px;top:89px;width:942px;height:70px;border:2px solid #c3c9dc;border-radius:9px;background:#fff;box-sizing:border-box"></div>
<div style="position:absolute;left:2339px;top:99.5px;width:105px;height:49px;background:#e1e4ee;border-radius:9px"></div>
<div style="position:absolute;left:3289px;top:89px;width:205px;height:70px;border:2px solid #c3c9dc;border-radius:9px;background:#fff;box-sizing:border-box;overflow:hidden"></div>
<div style="position:absolute;left:3427px;top:89px;width:66.5px;height:70px;background:#f8f9fb;border:2px solid #e1e4ee;border-left:1px solid #fff;border-radius:0 9px 9px 0;box-sizing:border-box"></div>
<div style="position:absolute;left:3357px;top:89px;width:70px;height:70px;background:#0067c6"></div>
<div style="position:absolute;left:3514px;top:89px;width:69.5px;height:70px;border:2px solid #c3c9dc;border-radius:9px;background:#fff;box-sizing:border-box"></div>
<div style="position:absolute;left:3604px;top:89px;width:69.5px;height:70px;border:2px solid #c3c9dc;border-radius:9px;background:#fff;box-sizing:border-box"></div>
<svg style="position:absolute;left:0;top:0" width="3714" height="189" viewBox="0 0 3714 189">
<g fill="none" stroke="#949ca1" stroke-width="3.1"><path d="M58.9 47.9 L58.9 45.7 A8.2 8.2 0 1 0 50.7 53.9 L67.1 53.9 A8.3 8.3 0 1 1 58.8 62.2 L58.8 63"/></g><path d="M58.9 58.6 L64 63.7 L53.8 63.7 Z" fill="#949ca1"/>
<path d="M163 44 L174.5 55 L163 66" fill="none" stroke="#6b747b" stroke-width="2.8"/>
<g fill="none" stroke="#6b747b" stroke-width="3"><circle cx="512.5" cy="109" r="5"/><circle cx="512.5" cy="135" r="5"/><circle cx="529.5" cy="115.5" r="5"/><path d="M512.5 114 L512.5 130"/><path d="M529 120.5 C528 126 524 125.5 512.5 128"/></g>
<path d="M812 119.5 L833 119.5 L822.5 131 Z" fill="#6b737b" stroke="#6b737b" stroke-width="2" stroke-linejoin="round"/>
<g fill="none" stroke="#0a69c8" stroke-width="3.54"><path d="M1275.16 107.77 L1261.77 107.77 L1261.77 138.23 L1288.87 138.23 L1288.87 124.94"/><path d="M1281.22 107.77 L1292.23 107.77 L1292.23 118.85"/><path d="M1292.23 107.77 L1274.62 125.28"/></g>
<defs><linearGradient id="awsg" x1="0" y1="1" x2="1" y2="0"><stop offset="0" stop-color="#3a2fc4"/><stop offset="1" stop-color="#4f73f5"/></linearGradient></defs><rect x="1362" y="104" width="40" height="40" fill="url(#awsg)"/><g fill="none" stroke="#fff" stroke-width="1.3"><rect x="1369.5" y="111" width="25" height="10.5" rx="2"/><path d="M1370.2 119 L1379 119 M1380.2 119 L1383 119 M1384.2 119 L1393.8 119" stroke-width="1.7" stroke-opacity="0.65"/><path d="M1372.5 121.5 L1372.5 136.5 L1391.5 136.5 L1391.5 121.5"/><path d="M1378 126.5 L1375.5 129 L1378 131.5 M1386 126.5 L1388.5 129 L1386 131.5 M1383 125.5 L1381 132.5"/></g>
<path d="M3226 119 L3247.5 119 L3236.75 131 Z" fill="#6b737b" stroke="#6b737b" stroke-width="2" stroke-linejoin="round"/>
<path d="M3307 124 L3322.5 108.5 L3322.5 139.5 Z M3322 124 L3337.5 108.5 L3337.5 139.5 Z" fill="#6b737b"/>
<rect x="3378.5" y="108.6" width="10" height="30.6" fill="#fff"/><rect x="3395" y="108.6" width="10" height="30.6" fill="#fff"/>
<path d="M3446 108.5 L3461.5 124 L3446 139.5 Z M3460.5 108.5 L3476 124 L3460.5 139.5 Z" fill="#aab0b5"/>
<g fill="none" stroke="#6b747b" stroke-width="3.6"><path d="M3533.5 125 A15.5 15.5 0 0 0 3562 132"/><path d="M3564.5 123 A15.5 15.5 0 0 0 3536.5 115"/><path d="M3534 108 L3534 117.5 L3543 117.5"/><path d="M3564 140 L3564 130.5 L3555 130.5"/></g>
<path d="M3633.57 112.19 L3635.13 107.24 L3642.87 107.24 L3644.43 112.19 L3644.90 113.78 L3646.52 113.39 L3651.58 112.27 L3655.45 118.97 L3651.94 122.79 L3650.80 124.00 L3651.94 125.21 L3655.45 129.03 L3651.58 135.73 L3646.52 134.61 L3644.90 134.22 L3644.43 135.81 L3642.87 140.76 L3635.13 140.76 L3633.57 135.81 L3633.10 134.22 L3631.48 134.61 L3626.42 135.73 L3622.55 129.03 L3626.06 125.21 L3627.20 124.00 L3626.06 122.79 L3622.55 118.97 L3626.42 112.27 L3631.48 113.39 L3633.10 113.78 Z" fill="#646e76"/><circle cx="3639" cy="124" r="5.8" fill="#fff"/>
</svg>
<span id="bc_ci" style="position:absolute;left:99.00px;top:37.94px;font-family:'Liberation Sans', sans-serif;font-size:33.14px;line-height:33.14px;font-weight:400;color:#5f6b74;white-space:pre;letter-spacing:0.078px;">CI</span>
<span id="bc_pipe" style="position:absolute;left:205.00px;top:37.94px;font-family:'Liberation Sans', sans-serif;font-size:33.14px;line-height:33.14px;font-weight:400;color:#5f6b74;white-space:pre;letter-spacing:0.330px;">Pipelines</span>
<span id="title" style="position:absolute;left:40.00px;top:105.71px;font-family:'Liberation Sans', sans-serif;font-size:38.14px;line-height:38.14px;font-weight:700;color:#1c2b34;white-space:pre;letter-spacing:-0.594px;">test_and_deploy_cart</span>
<span id="main" style="position:absolute;left:548.00px;top:105.94px;font-family:'Liberation Sans', sans-serif;font-size:35.5px;line-height:35.5px;font-weight:400;color:#1c2b34;white-space:pre;letter-spacing:0.266px;">main</span>
<span id="default" style="position:absolute;left:660.00px;top:113.14px;font-family:'Liberation Sans', sans-serif;font-size:27px;line-height:27px;font-weight:700;color:#585e72;white-space:pre;letter-spacing:-0.833px;">DEFAULT</span>
<span id="repo" style="position:absolute;left:909.50px;top:107.94px;font-family:'Liberation Sans', sans-serif;font-size:33.14px;line-height:33.14px;font-weight:400;color:#0a69c8;white-space:pre;letter-spacing:0.962px;">Datadog/cart-tracking</span>
<span id="aws" style="position:absolute;left:1422.00px;top:106.94px;font-family:'Liberation Sans', sans-serif;font-size:33.14px;line-height:33.14px;font-weight:400;color:#1c2b34;white-space:pre;letter-spacing:-0.337px;">AWS CodePipeline</span>
<span id="7d" style="position:absolute;left:2372.00px;top:107.94px;font-family:'Liberation Sans', sans-serif;font-size:33.14px;line-height:33.14px;font-weight:400;color:#5d6670;white-space:pre;letter-spacing:1.577px;">7d</span>
<span id="past" style="position:absolute;left:2466.00px;top:107.94px;font-family:'Liberation Sans', sans-serif;font-size:33.14px;line-height:33.14px;font-weight:400;color:#1c2b34;white-space:pre;letter-spacing:-0.402px;">Past 7 Days</span>
</div>
</body></html>
